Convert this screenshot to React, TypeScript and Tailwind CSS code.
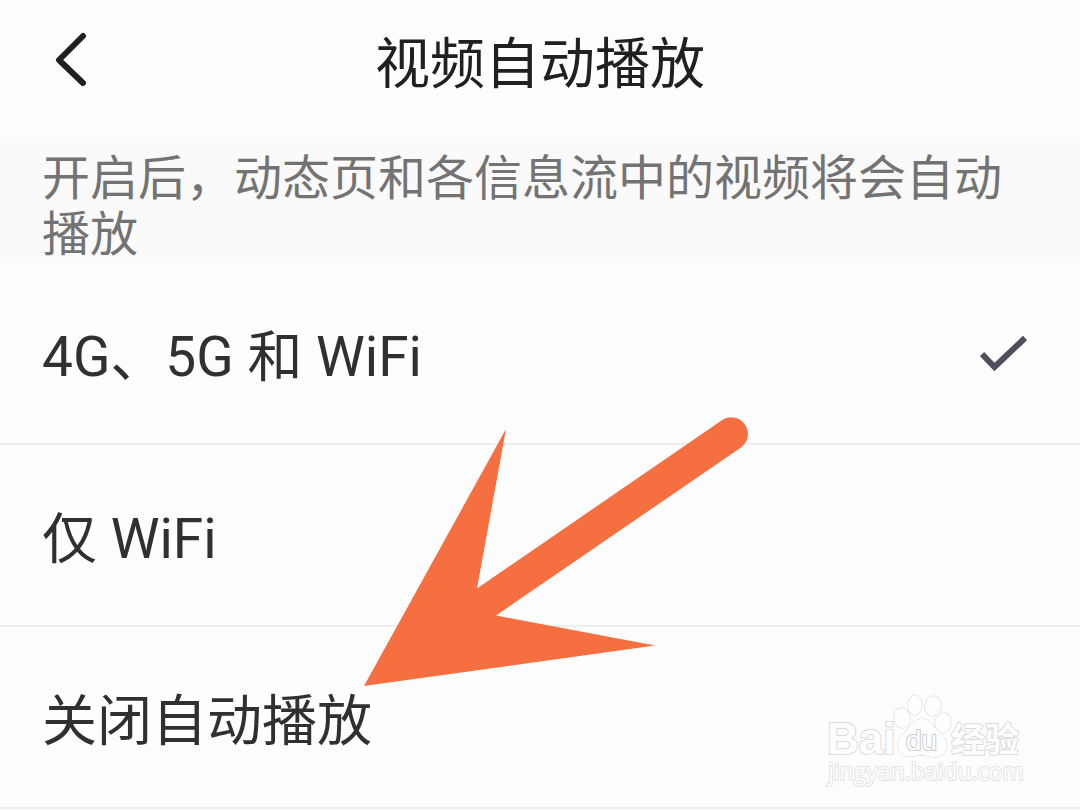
import { useState } from "react";

const options = [
  { id: "all", label: "4G、5G 和 WiFi" },
  { id: "wifi", label: "仅 WiFi" },
  { id: "off", label: "关闭自动播放" },
];

function Pointer() {
  return (
    <svg
      className="absolute left-[364px] top-[416px] pointer-events-none"
      width="386"
      height="272"
      viewBox="364 416 386 272"
      fill="#f66f41"
      aria-hidden="true"
    >
      <path d="M364 686 506 429 477 588.500 721.500 420.500A16.500 16.500 0 0 1 741 447.500L496 615.500 655 645.500Z" />
    </svg>
  );
}

function Watermark() {
  return (
    <svg
      className="absolute left-[824px] top-[690px] pointer-events-none"
      width="204"
      height="104"
      viewBox="824 690 204 104"
      fill="#fefefe"
      stroke="#dadada"
      strokeWidth="2"
      strokeLinejoin="round"
      paintOrder="stroke"
    >
      <text x="827" y="754" className="font-['Liberation_Sans'] text-[44px] font-bold">Bai</text>
      <g stroke="#d0d0d0" strokeWidth="1">
        <ellipse cx="902" cy="718" rx="8" ry="10" transform="rotate(-8 902 718)" />
        <ellipse cx="915" cy="705" rx="7" ry="10" />
        <ellipse cx="933" cy="706" rx="8" ry="10" transform="rotate(10 933 706)" />
        <ellipse cx="943" cy="723" rx="8" ry="10" transform="rotate(10 943 723)" />
        <path d="M922 719C930 719 934 726 938 731C943 736 947 740 947 746C947 753 942 757 935 757C929 757 926 755 921 755C916 755 913 757 908 756C901 756 898 751 898 745C898 738 903 735 907 730C911 725 914 719 922 719Z" />
      </g>
      <text x="906" y="750" stroke="#cccccc" className="font-['Liberation_Sans'] text-[28px]">du</text>
      <text x="951" y="752" className="font-['Noto_Sans_CJK_SC'] text-[34px] font-bold">经验</text>
      <text x="828" y="780" stroke="#e2e2e2" className="font-['Open_Sans'] text-[23px]">jingyan.baidu.com</text>
    </svg>
  );
}

export default function App() {
  const [selected, setSelected] = useState("all");

  return (
    <main className="relative min-h-screen overflow-hidden bg-[#fdfdfd] font-[Roboto,'Noto_Sans_CJK_SC',sans-serif] text-[#303030]">
      <header className="grid grid-cols-[96px_1fr_96px] items-center h-[143px] pb-6">
        <button type="button" aria-label="返回" className="flex justify-center pl-12">
          <svg
            width="36"
            height="56"
            viewBox="0 0 36 56"
            fill="none"
            stroke="#202020"
            strokeWidth="6"
            strokeLinecap="round"
            strokeLinejoin="round"
          >
            <path d="M29 4 5 28 29 51" />
          </svg>
        </button>
        <h1 className="pt-2 text-center text-[55px] leading-[64px] font-normal text-[#202020]">视频自动播放</h1>
      </header>

      <p className="bg-[#fafafa] px-[42px] pt-2 text-5xl leading-[56px] text-[#737373]">
        开启后，动态页和各信息流中的视频将会自动播放
      </p>

      <div role="radiogroup" aria-label="视频自动播放">
        {options.map((item) => (
          <label
            key={item.id}
            className="flex items-center justify-between h-[182px] pt-2 pl-[42px] pr-[52px] border-b-2 border-[#eeeeee] cursor-pointer"
          >
            <span className="text-[55px] leading-[64px]">{item.label}</span>
            <span className="grid place-items-center">
              <input
                type="radio"
                name="autoplay"
                value={item.id}
                checked={selected === item.id}
                onChange={() => setSelected(item.id)}
                className="peer appearance-none size-12 [grid-area:1/1]"
              />
              <svg
                className="hidden peer-checked:block [grid-area:1/1]"
                width="48"
                height="48"
                viewBox="0 0 48 48"
                fill="none"
                stroke="#524c5c"
                strokeWidth="6"
              >
                <path d="M2 21 14.500 34 45 5" />
              </svg>
            </span>
          </label>
        ))}
      </div>

      <Pointer />
      <Watermark />
    </main>
  );
}
